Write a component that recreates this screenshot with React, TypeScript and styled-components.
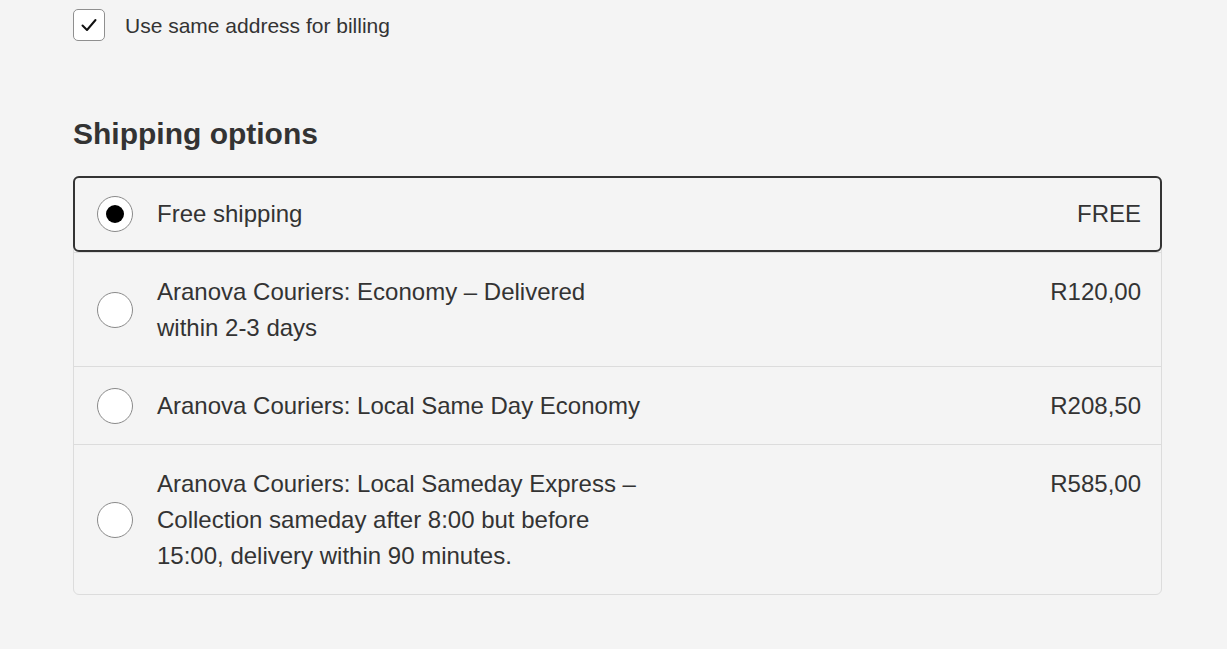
import styled, { createGlobalStyle } from "styled-components";

const GlobalStyle = createGlobalStyle`
  body {
    margin: 0;
    background: #f4f4f4;
    color: #333;
    font-family: "Liberation Sans", Arial, sans-serif;
  }
`;

const Page = styled.div`
  padding: 9px 65px 40px 73px;
  display: flex;
  flex-direction: column;
`;

const CheckRow = styled.label`
  display: flex;
  align-items: center;
  gap: 20px;
  font-size: 21px;
  line-height: 31px;
`;

const CheckBox = styled.span`
  width: 30px;
  height: 30px;
  border: 1px solid #8f8f8f;
  border-radius: 5px;
  background: #fff;
  display: flex;
  align-items: center;
  justify-content: center;
  flex-shrink: 0;
`;

const Title = styled.h2`
  margin: 75px 0 24px;
  font-size: 30px;
  line-height: 36px;
  font-weight: 700;
`;

const List = styled.div`
  border: 1px solid #dcdcdc;
  border-radius: 6px;
  display: flex;
  flex-direction: column;
`;

const Row = styled.div<{ $selected?: boolean }>`
  display: flex;
  align-items: flex-start;
  gap: 24px;
  font-size: 24px;
  line-height: 36px;
  margin: ${(p) => (p.$selected ? "-1px -1px 0" : "0")};
  padding: ${(p) => (p.$selected ? "18px 19px 18px 22px" : "21px 20px 20px 23px")};
  border: ${(p) => (p.$selected ? "2px solid #333" : "none")};
  border-radius: ${(p) => (p.$selected ? "6px" : "0")};
  & + & {
    border-top: 1px solid #dcdcdc;
  }
`;

const Radio = styled.span<{ $checked?: boolean }>`
  width: 34px;
  height: 34px;
  border: 1px solid #8a8a8a;
  border-radius: 50%;
  background: #fff;
  flex-shrink: 0;
  align-self: center;
  display: flex;
  align-items: center;
  justify-content: center;
  &::after {
    content: "";
    display: ${(p) => (p.$checked ? "block" : "none")};
    width: 18px;
    height: 18px;
    border-radius: 50%;
    background: #000;
  }
`;

const Label = styled.span`
  flex: 1;
  max-width: 490px;
`;

const Price = styled.span`
  margin-left: auto;
  white-space: nowrap;
`;

const options = [
  { label: "Free shipping", price: "FREE" },
  { label: "Aranova Couriers: Economy – Delivered within 2-3 days", price: "R120,00" },
  { label: "Aranova Couriers: Local Same Day Economy", price: "R208,50" },
  {
    label:
      "Aranova Couriers: Local Sameday Express – Collection sameday after 8:00 but before 15:00, delivery within 90 minutes.",
    price: "R585,00",
  },
];

const App = () => {
  const selected = 0;
  return (
    <>
      <GlobalStyle />
      <Page>
        <CheckRow>
          <CheckBox>
            <svg width="20" height="20" viewBox="0 0 20 20" fill="none">
              <polyline
                points="3.5,10.5 8,15 16.5,5"
                stroke="#111"
                strokeWidth="2"
                strokeLinecap="round"
                strokeLinejoin="round"
              />
            </svg>
          </CheckBox>
          Use same address for billing
        </CheckRow>
        <Title>Shipping options</Title>
        <List>
          {options.map((o, i) => (
            <Row key={o.label} $selected={i === selected}>
              <Radio $checked={i === selected} />
              <Label>{o.label}</Label>
              <Price>{o.price}</Price>
            </Row>
          ))}
        </List>
      </Page>
    </>
  );
};

export default App;
